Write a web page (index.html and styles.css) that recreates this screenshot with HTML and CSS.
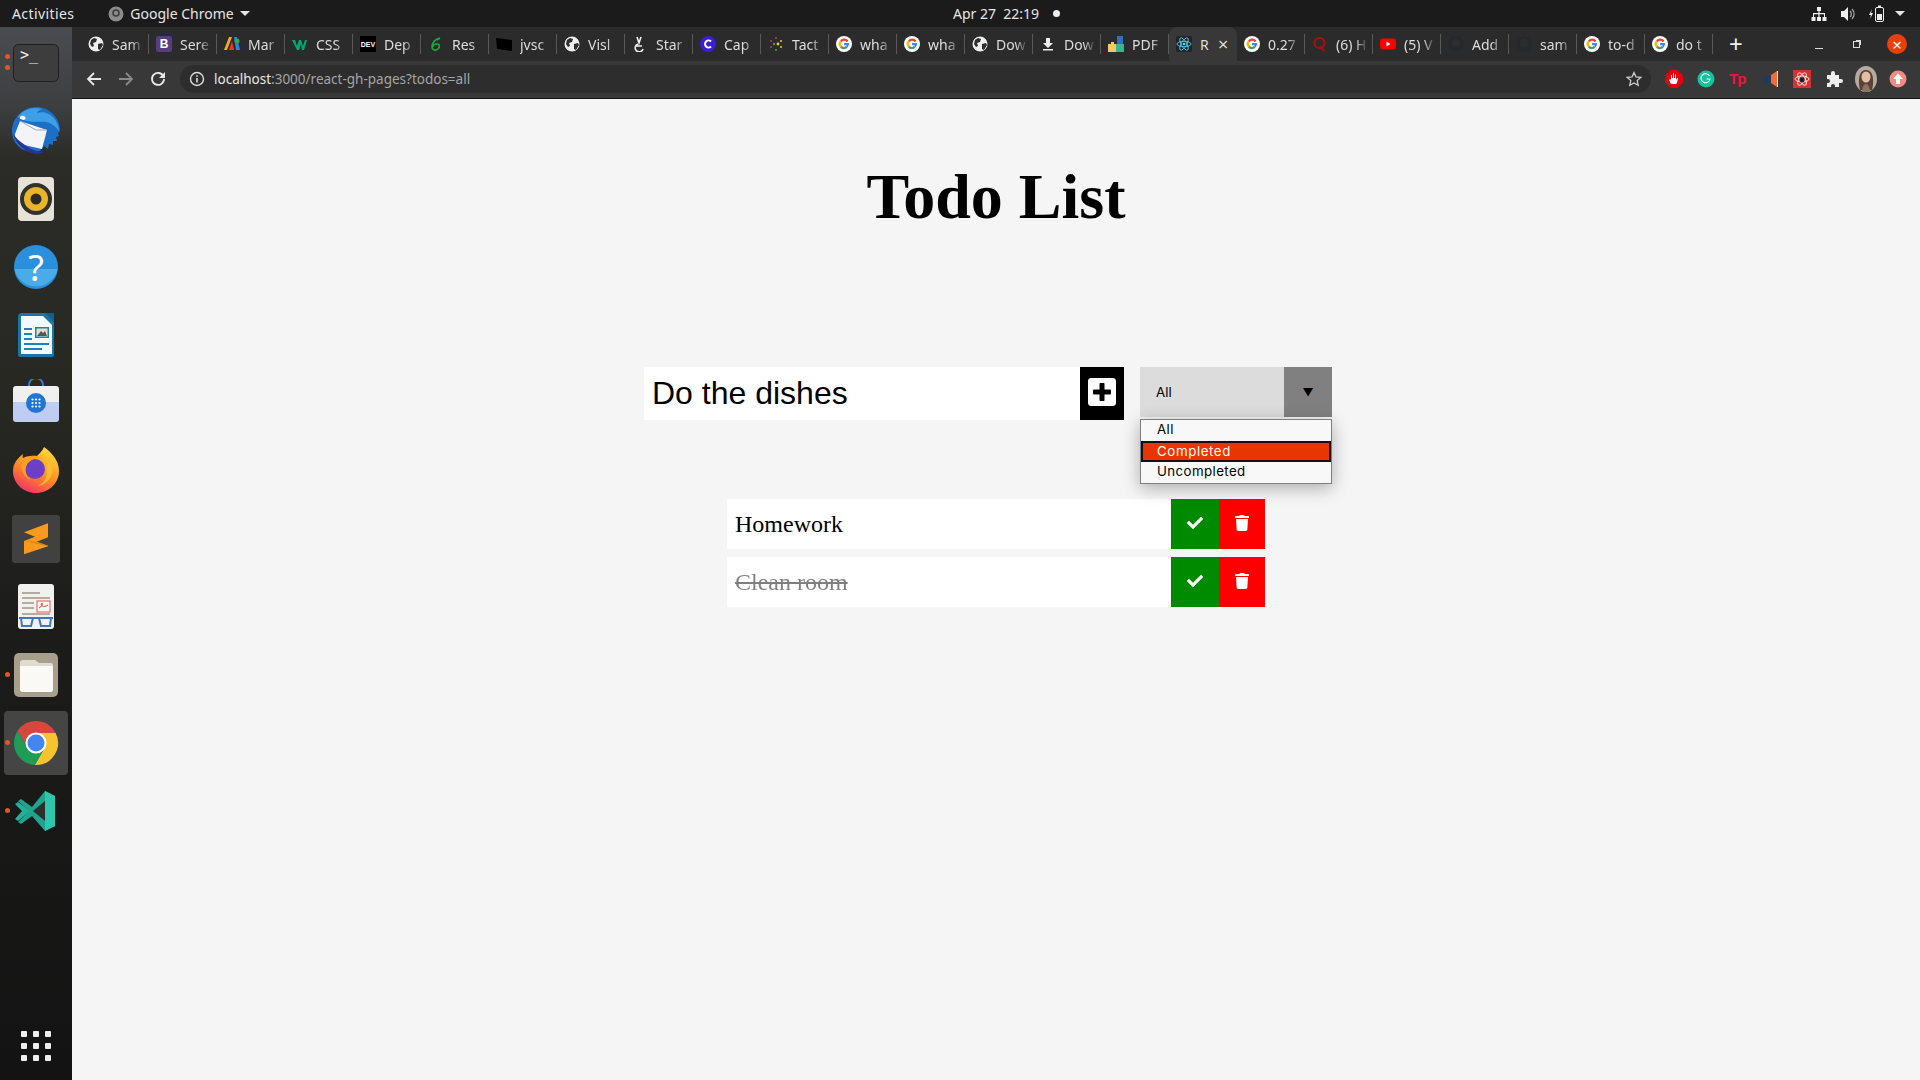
FILE: index.html
```html
<!doctype html>
<html lang="en">
<head>
    <meta charset="UTF-8">
    <link rel="stylesheet" href="styles.css">
    <title>Todo List</title>
</head>
<body>
<svg class="defs" width="0" height="0">
    <symbol id="globe" viewBox="0 0 16 16">
        <circle cx="8" cy="8" r="7.5" fill="#eee"/>
        <path d="M3 4l3-2 3 1-1 3-3 1 1 3-2 1-2-3zM10 8l4-1 1 2-3 5-2-1z" fill="#2d2d2d"/>
    </symbol>
    <symbol id="google" viewBox="0 0 16 16">
        <circle cx="8" cy="8" r="8" fill="#fff"/>
        <path d="M12.5 5.2A5 5 0 0 0 4 4.6l1.8 1.6a2.7 2.7 0 0 1 4.6-.1z" fill="#ea4335"/>
        <path d="M4 4.6a5 5 0 0 0 0 6.8l1.8-1.6a2.7 2.7 0 0 1 0-3.6z" fill="#fbbc05"/>
        <path d="M4 11.4a5 5 0 0 0 7.6.2l-1.8-1.5a2.7 2.7 0 0 1-4-.3z" fill="#34a853"/>
        <path d="M13 7H8v2.2h2.8a2.7 2.7 0 0 1-1 .9l1.8 1.5A5 5 0 0 0 13 7z" fill="#4285f4"/>
    </symbol>
    <symbol id="github" viewBox="0 0 16 16">
        <circle cx="8" cy="8" r="7.5" fill="#24292e"/>
        <circle cx="8" cy="7" r="4" fill="#2d2d2d"/>
    </symbol>
    <symbol id="icon-check" viewBox="0 0 512 512">
        <path fill="#fff" d="M173.898 439.404l-166.4-166.4c-9.997-9.997-9.997-26.206 0-36.204l36.203-36.204c9.997-9.998 26.207-9.998 36.204 0L192 312.69 432.095 72.596c9.997-9.997 26.207-9.997 36.204 0l36.203 36.204c9.997 9.997 9.997 26.206 0 36.204l-294.4 294.401c-9.998 9.997-26.207 9.997-36.204-.001z"/>
    </symbol>
    <symbol id="icon-trash" viewBox="0 0 448 512">
        <path fill="#fff" d="M432 32H312l-9.4-18.7A24 24 0 0 0 281.1 0H166.8a23.72 23.72 0 0 0-21.4 13.3L136 32H16A16 16 0 0 0 0 48v32a16 16 0 0 0 16 16h416a16 16 0 0 0 16-16V48a16 16 0 0 0-16-16zM53.2 467a48 48 0 0 0 47.9 45h245.8a48 48 0 0 0 47.9-45L416 128H32z"/>
    </symbol>
</svg>

<header class="topbar">
    <div class="topbar-left">
        <span class="activities">Activities</span>
        <span class="app-menu">
            <svg class="app-icon" viewBox="0 0 16 16"><circle cx="8" cy="8" r="7.5" fill="#8b8b8b"/><circle cx="8" cy="7" r="3" fill="none" stroke="#3a3a3a" stroke-width="1.5"/></svg>
            Google Chrome
            <i class="caret"></i>
        </span>
    </div>
    <div class="clock">
        <span>Apr 27&nbsp; 22:19</span>
        <i class="clock-dot"></i>
    </div>
    <div class="tray">
        <svg width="16" height="16" viewBox="0 0 16 16"><path fill="#eee" d="M6 1h4v4H8.600v2H14v4h1.500v4h-4v-4H13V8.300H8.600V11H10v4H6v-4h1.400V8.300H3V11h1.500v4h-4v-4H2V7h5.400V5H6z"/></svg>
        <svg width="16" height="16" viewBox="0 0 16 16"><path fill="#eee" d="M1 5h3l4-4v14l-4-4H1z"/><path fill="none" stroke="#aaa" stroke-width="1.200" d="M10 5a4 4 0 0 1 0 6M12 3a7 7 0 0 1 0 10"/></svg>
        <svg width="16" height="18" viewBox="0 0 16 18"><path fill="#eee" d="M3 4L0 10h2l-1 4 3-6H2z"/><rect x="6.500" y="2.500" width="8" height="14" rx="1.500" fill="none" stroke="#eee"/><rect x="9" y="0.500" width="3" height="2" fill="#eee"/><rect x="8" y="9" width="5" height="6" fill="#eee"/></svg>
        <i class="caret"></i>
    </div>
</header>

<div class="desktop">
    <nav class="dock">
        <div class="dock-slot has-dot">
            <i class="dock-dot"></i><i class="dock-dot"></i>
            <svg class="dock-icon" viewBox="0 0 48 48">
                <rect x="1.500" y="5.500" width="45" height="37" rx="5" fill="#3d3d3d" stroke="#1f1f1f"/>
                <text x="8" y="21" class="prompt">&gt;_</text>
            </svg>
        </div>
        <div class="dock-slot">
            <svg class="dock-icon" viewBox="0 0 48 48">
                <path d="M24 0c13 0 24 10 24 24l-2 2 1 3-3 1 1 4-4 0 0 4-4-1-1 5-4-3-4 5C11 48 0 37 0 24S11 0 24 0z" fill="#1c6fc6"/>
                <path d="M6 10C11 3 20-1 30 2c-3 1-5 3-5 4 6-2 14 0 19 8 2 4 3 7 3 10-3-4-7-8-13-9-7-1-18 2-28-5z" fill="#3d9fe6"/>
                <path d="M8 12c-1-2 1-4 4-3l2 2-2 2z" fill="#fff"/>
                <path d="M8 14l27 9-5 19-18-4C6 34 2 30 3 27z" fill="#f4f4f8"/>
                <path d="M8 14l16 9 11 0" fill="none" stroke="#a7a9b8"/>
                <path d="M1 27c3 9 11 19 24 20 3 0 5-1 7-2-8 0-14-3-19-7-5-3-9-7-12-11z" fill="#27339a"/>
            </svg>
        </div>
        <div class="dock-slot">
            <svg class="dock-icon" viewBox="0 0 48 48">
                <rect x="6" y="2" width="36" height="44" rx="4" fill="#e8e3d8"/>
                <circle cx="24" cy="24" r="16" fill="#33312e"/>
                <circle cx="24" cy="24" r="12" fill="#e9b429"/>
                <circle cx="24" cy="24" r="5.500" fill="#2c2a28"/>
            </svg>
        </div>
        <div class="dock-slot">
            <svg class="dock-icon" viewBox="0 0 48 48">
                <circle cx="24" cy="24" r="22" fill="#2b8fdc"/>
                <path d="M2.500 26h43a22 22 0 0 1-43 0z" fill="#49ace8"/>
                <text x="24" y="38" class="help-mark">?</text>
            </svg>
        </div>
        <div class="dock-slot">
            <svg class="dock-icon" viewBox="0 0 48 48">
                <path d="M10 2h32v2L42 44a2 2 0 0 1-2 2H8a2 2 0 0 1-2-2V6a4 4 0 0 1 4-4z" fill="#1b75a8"/>
                <path d="M9 5h22l9 9v29H9z" fill="#f4fafd"/>
                <path d="M33 2h9v9z" fill="#165f8a"/>
                <path d="M12 17h8v2h-8zM12 22h8v2h-8zM12 27h8v2h-8zM12 32h25v2H12zM12 37h18v2H12z" fill="#1b82bd"/>
                <rect x="23" y="16" width="14" height="11" fill="#1b82bd"/>
                <rect x="24.500" y="17.500" width="11" height="8" fill="#e6dec8"/>
                <path d="M25 25l4-5 2 2 2-2 2 5z" fill="#555"/>
            </svg>
        </div>
        <div class="dock-slot">
            <svg class="dock-icon" viewBox="0 0 48 48">
                <path d="M17 9V6a7 7 0 0 1 14 0v3" fill="none" stroke="#2c7bd6" stroke-width="2"/>
                <path d="M4 7h40a3 3 0 0 1 3 3v14H1V10a3 3 0 0 1 3-3z" fill="#f0f0f0"/>
                <path d="M1 23h46v17a3 3 0 0 1-3 3H4a3 3 0 0 1-3-3z" fill="#bfcdf2"/>
                <circle cx="24" cy="24" r="10" fill="#1f74d4"/>
                <g fill="#fff">
                    <circle cx="20.500" cy="20.500" r="1.100"/><circle cx="24" cy="20.500" r="1.100"/><circle cx="27.500" cy="20.500" r="1.100"/>
                    <circle cx="20.500" cy="24" r="1.100"/><circle cx="24" cy="24" r="1.100"/><circle cx="27.500" cy="24" r="1.100"/>
                    <circle cx="20.500" cy="27.500" r="1.100"/><circle cx="24" cy="27.500" r="1.100"/><circle cx="27.500" cy="27.500" r="1.100"/>
                </g>
            </svg>
        </div>
        <div class="dock-slot">
            <svg class="dock-icon" viewBox="0 0 48 48">
                <defs>
                    <linearGradient id="fox" x1="0.800" y1="0" x2="0.300" y2="1">
                        <stop offset="0" stop-color="#ffdf3c"/>
                        <stop offset="0.550" stop-color="#ff8f1f"/>
                        <stop offset="1" stop-color="#f4306a"/>
                    </linearGradient>
                </defs>
                <path d="M1 24C1 16 6 11 11 7c-1 3 0 5 1 6 3-3 8-5 13-4 3-3 6-6 7-9 7 5 15 13 15 24 0 12-10 22-23 22S1 36 1 24z" fill="url(#fox)"/>
                <circle cx="23" cy="22" r="10" fill="#6d3ec6"/>
                <path d="M11 11c6-3 15-3 20 1-7-2-11 0-15 4-4 5-3 14 3 17-7-2-12-11-8-22z" fill="#ff9e22"/>
                <path d="M33 10c6 4 9 12 6 19-2 5-7 9-13 10 6-3 9-8 9-15 0-5-1-9-2-14z" fill="#ffbb33"/>
            </svg>
        </div>
        <div class="dock-slot">
            <svg class="dock-icon" viewBox="0 0 48 48">
                <rect width="48" height="48" rx="3" fill="#414141"/>
                <path d="M12 17.300L36 8.300v14l-11.300 4.400L36 30.700v.5L12 39.300V26l11-4.300-11-4.400z" fill="#f99a1c"/>
                <path d="M12 26l12.700.7L36 30.700v.5L12 26z" fill="#d98410"/>
            </svg>
        </div>
        <div class="dock-slot">
            <svg class="dock-icon" viewBox="0 0 48 48">
                <rect x="6" y="1" width="36" height="45" rx="3" fill="#f1f1ef"/>
                <path d="M10 9h18v2H10zM10 14h28v2H10zM10 19h12v2H10zM10 24h12v2H10zM10 30h28v2H10z" fill="#b5ae9c"/>
                <rect x="25" y="18" width="13" height="11" fill="#f7f7f5" stroke="#e65a4e"/>
                <path d="M27 25c3-1 4-5 3-5-2 1 0 6 6 2" fill="none" stroke="#e0453a"/>
                <path d="M7 35h34M9 35l1 8h9l2-8M39 35l-1 8h-9l-2-8" fill="none" stroke="#3f76c0" stroke-width="2"/>
            </svg>
        </div>
        <div class="dock-slot has-dot">
            <i class="dock-dot"></i>
            <svg class="dock-icon" viewBox="0 0 48 48">
                <rect x="2" y="2" width="44" height="44" rx="5" fill="#a79f8c"/>
                <path d="M8 12a3 3 0 0 1 3-3h12l4 3h12a2 2 0 0 1 2 2v24a3 3 0 0 1-3 3H11a3 3 0 0 1-3-3z" fill="#e0dcd2"/>
                <path d="M8 16a1 1 0 0 1 1-1h30a2 2 0 0 1 2 2v21a3 3 0 0 1-3 3H11a3 3 0 0 1-3-3z" fill="#faf9f6"/>
            </svg>
        </div>
        <div class="dock-slot has-dot is-active">
            <i class="dock-dot"></i>
            <svg class="dock-icon" viewBox="0 0 48 48">
                <path d="M43.600 14A22 22 0 0 0 5.540 12.030L15.340 29 24 14z" fill="#d8473b"/>
                <path d="M43.600 14H24l8.660 15-9.800 16.970A22 22 0 0 0 43.600 14z" fill="#f7c430"/>
                <path d="M5.540 12.030A22 22 0 0 0 22.860 45.970L32.660 29H15.340z" fill="#1f9c55"/>
                <circle cx="24" cy="24" r="10.500" fill="#fff"/>
                <circle cx="24" cy="24" r="8.500" fill="#4286f0"/>
            </svg>
        </div>
        <div class="dock-slot has-dot">
            <i class="dock-dot"></i>
            <svg class="dock-icon" viewBox="0 0 48 48">
                <path d="M3 17l3-2 12 9-12 10-3-2 7-8z" fill="#23b09a"/>
                <path d="M6 14l3-2 11 8L33 4l10 5v30l-10 5-13-15-11 8-3-2 11-11z" fill="#1fa58f"/>
                <path d="M33 4l10 5v30l-10 5z" fill="#2fc7ac"/>
                <path d="M33 14v20l-12-10z" fill="#2d2f2b"/>
            </svg>
        </div>
        <div class="dock-apps">
            <i></i><i></i><i></i><i></i><i></i><i></i><i></i><i></i><i></i>
        </div>
    </nav>

    <div class="browser">
        <div class="tabstrip">
            <div class="tab"><svg class="favicon"><use href="#globe"/></svg><span class="tab-title">Sam</span></div>
            <div class="tab"><svg class="favicon" viewBox="0 0 16 16"><rect width="16" height="16" rx="2" fill="#563d7c"/><text x="8" y="12" class="fav-letter">B</text></svg><span class="tab-title">Sere</span></div>
            <div class="tab"><svg class="favicon" viewBox="0 0 16 16"><path d="M0 14L5 1h3L3 14z" fill="#f9a825"/><path d="M5 14L8 5l2 9z" fill="#e53935"/><path d="M10 1h3l3 13h-4z" fill="#1e88e5"/><circle cx="13" cy="5" r="2.500" fill="#43a047"/></svg><span class="tab-title">Mar</span></div>
            <div class="tab"><svg class="favicon" viewBox="0 0 16 16"><path d="M0 4h3l2 6 2-6h2l2 6 2-6h2l-3 10h-2L9 8l-2 6H5z" fill="#04aa6d"/></svg><span class="tab-title">CSS</span></div>
            <div class="tab"><svg class="favicon" viewBox="0 0 16 16"><rect width="16" height="16" fill="#000"/><text x="8" y="11" class="fav-dev">DEV</text></svg><span class="tab-title">Dep</span></div>
            <div class="tab"><svg class="favicon" viewBox="0 0 16 16"><path d="M12 2C7 3 4 7 4 11c0 3 4 4 6 2s2-5-1-5-4 2-4 3M12 2l-3 2" fill="none" stroke="#0fae3c" stroke-width="1.600"/></svg><span class="tab-title">Res</span></div>
            <div class="tab"><svg class="favicon" viewBox="0 0 16 16"><path d="M0 2l16 2v11L1 13z" fill="#000"/></svg><span class="tab-title">jvsc</span></div>
            <div class="tab"><svg class="favicon"><use href="#globe"/></svg><span class="tab-title">Visl</span></div>
            <div class="tab"><svg class="favicon" viewBox="0 0 16 16"><path d="M5 1l2 6 2-6M6 8a4 4 0 1 0 5 5M4 10h6" fill="none" stroke="#eee" stroke-width="1.600"/></svg><span class="tab-title">Star</span></div>
            <div class="tab"><svg class="favicon" viewBox="0 0 16 16"><circle cx="8" cy="8" r="8" fill="#3a1ed6"/><path d="M11 5.500a3.500 3.500 0 1 0 0 5" fill="none" stroke="#fff" stroke-width="2"/></svg><span class="tab-title">Cap</span></div>
            <div class="tab"><svg class="favicon" viewBox="0 0 16 16"><g fill="#a5496b"><circle cx="3" cy="5" r="1"/><circle cx="3" cy="11" r="1"/><circle cx="8" cy="2" r="1"/></g><g fill="#5c9a4a"><circle cx="8" cy="14" r="1"/><circle cx="6" cy="8" r="1.200"/></g><g fill="#f2c82c"><circle cx="13" cy="5" r="1"/><circle cx="13" cy="11" r="1"/><circle cx="10" cy="8" r="1.400"/></g></svg><span class="tab-title">Tact</span></div>
            <div class="tab"><svg class="favicon"><use href="#google"/></svg><span class="tab-title">wha</span></div>
            <div class="tab"><svg class="favicon"><use href="#google"/></svg><span class="tab-title">wha</span></div>
            <div class="tab"><svg class="favicon"><use href="#globe"/></svg><span class="tab-title">Dow</span></div>
            <div class="tab"><svg class="favicon" viewBox="0 0 16 16"><path d="M6 2h4v5h3l-5 5-5-5h3zM3 13h10v1.500H3z" fill="#eee"/></svg><span class="tab-title">Dow</span></div>
            <div class="tab"><svg class="favicon" viewBox="0 0 16 16"><path d="M0 8h3V6h3v2h2v8H0z" fill="#f7c964"/><path d="M9 0h6v8H9z" fill="#2f6fc4"/><path d="M8 8h8v8H8z" fill="#39b58f"/></svg><span class="tab-title">PDF</span></div>
            <div class="tab is-active"><svg class="favicon" viewBox="0 0 16 16"><rect width="16" height="16" rx="2" fill="#20232a"/><g fill="none" stroke="#61dafb" stroke-width="0.800"><ellipse cx="8" cy="8" rx="7" ry="2.700"/><ellipse cx="8" cy="8" rx="7" ry="2.700" transform="rotate(60 8 8)"/><ellipse cx="8" cy="8" rx="7" ry="2.700" transform="rotate(120 8 8)"/></g><circle cx="8" cy="8" r="1.300" fill="#61dafb"/></svg><span class="tab-title">R</span><span class="tab-close">×</span></div>
            <div class="tab"><svg class="favicon"><use href="#google"/></svg><span class="tab-title">0.27</span></div>
            <div class="tab"><svg class="favicon" viewBox="0 0 16 16"><circle cx="7.500" cy="7" r="5" fill="none" stroke="#a80f0f" stroke-width="2.200"/><path d="M8 10l4 5" stroke="#a80f0f" stroke-width="2.200"/></svg><span class="tab-title">(6) H</span></div>
            <div class="tab"><svg class="favicon" viewBox="0 0 16 16"><rect y="2.500" width="16" height="11" rx="3" fill="#f00"/><path d="M6.500 5.500l4 2.500-4 2.500z" fill="#fff"/></svg><span class="tab-title">(5) V</span></div>
            <div class="tab"><svg class="favicon"><use href="#github"/></svg><span class="tab-title">Add</span></div>
            <div class="tab"><svg class="favicon"><use href="#github"/></svg><span class="tab-title">sam</span></div>
            <div class="tab"><svg class="favicon"><use href="#google"/></svg><span class="tab-title">to-d</span></div>
            <div class="tab"><svg class="favicon"><use href="#google"/></svg><span class="tab-title">do t</span></div>
            <span class="new-tab">+</span>
            <div class="window-controls">
                <i class="win-min"></i>
                <i class="win-max"></i>
                <span class="win-close">×</span>
            </div>
        </div>

        <div class="toolbar">
            <svg class="nav-btn" viewBox="0 0 16 16"><path d="M15 8H2M8 2L2 8l6 6" fill="none" stroke="#e8e8e8" stroke-width="1.800"/></svg>
            <svg class="nav-btn" viewBox="0 0 16 16"><path d="M1 8h13M8 2l6 6-6 6" fill="none" stroke="#8a8a8a" stroke-width="1.800"/></svg>
            <svg class="nav-btn" viewBox="0 0 16 16"><path d="M13.500 5.500A6 6 0 1 0 14 8" fill="none" stroke="#e8e8e8" stroke-width="1.800"/><path d="M15 1v6H9z" fill="#e8e8e8"/></svg>
            <div class="omnibox">
                <svg class="info-icon" viewBox="0 0 16 16"><circle cx="8" cy="8" r="6.500" fill="none" stroke="#ddd" stroke-width="1.400"/><path d="M7.200 7h1.600v4.500H7.200zM7.200 4.200h1.600v1.600H7.200z" fill="#ddd"/></svg>
                <span class="url"><b>localhost</b>:3000/react-gh-pages?todos=all</span>
                <svg class="star" viewBox="0 0 16 16"><path d="M8 1.500l2 4.400 4.800.5-3.600 3.200 1 4.700L8 11.900l-4.200 2.400 1-4.700L1.200 6.400 6 5.900z" fill="none" stroke="#ccc" stroke-width="1.300"/></svg>
            </div>
            <div class="extensions">
                <svg viewBox="0 0 18 18"><path d="M5.500 0h7L18 5.500v7L12.500 18h-7L0 12.500v-7z" fill="#e3000f"/><path d="M6 14l-2-4 1-1 1 1V5h1v3h1V3.500h1V8h1V4.500h1V10l1-2h1l-1 5-1 1z" fill="#fff"/></svg>
                <svg viewBox="0 0 18 18"><circle cx="9" cy="9" r="8.500" fill="#15c39a"/><path d="M12.500 6a4.500 4.500 0 1 0 .5 3H9.500" fill="none" stroke="#fff" stroke-width="1.200"/></svg>
                <span class="ext-tp">Tp</span>
                <svg viewBox="0 0 18 18"><path d="M10 5l6-4v16l-6-4z" fill="#f26b38"/><path d="M16 1h1v16h-1z" fill="#eee"/><path d="M2 6h8v6H6v4H4v-4H2z" fill="#1f3a5f"/></svg>
                <svg viewBox="0 0 18 18"><rect width="18" height="18" fill="#d63031"/><g fill="none" stroke="#fff" stroke-width="0.800"><ellipse cx="9" cy="9" rx="7" ry="3"/><ellipse cx="9" cy="9" rx="7" ry="3" transform="rotate(60 9 9)"/><ellipse cx="9" cy="9" rx="7" ry="3" transform="rotate(120 9 9)"/></g><circle cx="9" cy="10" r="2.500" fill="#222"/></svg>
                <svg viewBox="0 0 18 18"><path d="M2 5h4V3a2 2 0 0 1 4 0v2h4v4h2a2 2 0 0 1 0 4h-2v4h-4v-1a2 2 0 0 0-4 0v1H2v-4h1a2 2 0 0 0 0-4H2z" fill="#eee"/></svg>
                <svg class="ext-avatar" viewBox="0 0 22 26"><ellipse cx="11" cy="13" rx="11" ry="13" fill="#b5aca0"/><path d="M5 24c-2-8-2-20 6-20s8 12 6 20z" fill="#5a4234"/><ellipse cx="11" cy="11" rx="4.500" ry="5.500" fill="#e4bfa3"/><path d="M7 26c0-5 2-8 4-8s4 3 4 8z" fill="#8a7466"/></svg>
                <svg viewBox="0 0 18 18"><circle cx="9" cy="9" r="8.500" fill="#f28b82"/><path d="M9 3.500L14 9h-3v5H7V9H4z" fill="#fff"/></svg>
            </div>
        </div>

        <main class="page">
            <h1>Todo List</h1>
            <form class="todo-form">
                <div class="todo-input">Do the dishes</div>
                <button class="todo-add" type="button">
                    <svg viewBox="0 0 448 512"><path fill="#fff" d="M400 32H48C21.500 32 0 53.500 0 80v352c0 26.500 21.500 48 48 48h352c26.500 0 48-21.500 48-48V80c0-26.500-21.500-48-48-48zm-32 252c0 6.600-5.400 12-12 12h-92v92c0 6.600-5.400 12-12 12h-56c-6.600 0-12-5.400-12-12v-92H92c-6.600 0-12-5.400-12-12v-56c0-6.600 5.400-12 12-12h92v-92c0-6.600 5.400-12 12-12h56c6.600 0 12 5.400 12 12v92h92c6.600 0 12 5.400 12 12v56z"/></svg>
                </button>
                <div class="select">
                    <span class="select-value">All</span>
                    <span class="select-arrow">▼</span>
                    <ul class="select-menu">
                        <li>All</li>
                        <li class="selected">Completed</li>
                        <li>Uncompleted</li>
                    </ul>
                </div>
            </form>
            <ul class="todo-list">
                <li class="todo">
                    <span class="todo-text">Homework</span>
                    <button class="btn-complete" type="button"><svg><use href="#icon-check"/></svg></button>
                    <button class="btn-delete" type="button"><svg><use href="#icon-trash"/></svg></button>
                </li>
                <li class="todo is-done">
                    <span class="todo-text">Clean room</span>
                    <button class="btn-complete" type="button"><svg><use href="#icon-check"/></svg></button>
                    <button class="btn-delete" type="button"><svg><use href="#icon-trash"/></svg></button>
                </li>
            </ul>
        </main>
    </div>
</div>
</body>
</html>
```

FILE: styles.css
```css
* {
    box-sizing: border-box;
}

html, body {
    height: 100%;
}

body {
    display: flex;
    flex-direction: column;
    height: 1080px;
    margin: 0;
    overflow: hidden;
    font-family: 'Noto Sans', sans-serif;
    background: #141414;
}

i {
    display: block;
}

.defs {
    position: absolute;
}

/* gnome top bar */
.topbar {
    display: flex;
    align-items: center;
    flex: none;
    height: 27px;
    color: #e6e6e6;
    font-size: 14px;
    background: #1b1b1b;
}

.topbar-left {
    display: flex;
    align-items: center;
    gap: 34px;
    width: 953px;
    padding-left: 12px;
}

.activities {
    letter-spacing: .4px;
}

.app-menu {
    display: flex;
    align-items: center;
    gap: 6px;
}

.app-icon {
    width: 16px;
    height: 16px;
}

.caret {
    width: 0;
    height: 0;
    border-top: 5px solid #e6e6e6;
    border-left: 5px solid transparent;
    border-right: 5px solid transparent;
}

.clock {
    display: flex;
    align-items: center;
    gap: 14px;
}

.clock-dot {
    width: 7px;
    height: 7px;
    border-radius: 50%;
    background: #eee;
}

.tray {
    display: flex;
    align-items: center;
    gap: 13px;
    margin-left: auto;
    padding-right: 15px;
}

.tray .caret {
    margin-left: -3px;
}

.desktop {
    display: flex;
    flex: 1;
    min-height: 0;
}

/* dock */
.dock {
    display: flex;
    flex-direction: column;
    flex: none;
    width: 72px;
    padding-top: 2px;
    background: linear-gradient(#4b4c51 0, #3d3e40 80px, #2b2c28 130px, #272822 380px, #1c1c1b 600px, #131313 1053px);
}

.dock-slot {
    position: relative;
    display: flex;
    align-items: center;
    justify-content: center;
    flex: none;
    height: 68px;
}

.dock-slot.is-active:before {
    content: "";
    position: absolute;
    top: 2px;
    left: 4px;
    width: 64px;
    height: 64px;
    border-radius: 4px;
    background: #454545;
}

.dock-icon {
    position: relative;
    width: 48px;
    height: 48px;
}

.dock-dot {
    position: absolute;
    left: 5px;
    top: 31px;
    width: 5px;
    height: 5px;
    border-radius: 50%;
    background: #e95420;
    z-index: 1;
}

.dock-dot:nth-child(2) {
    top: 36px;
}

.dock-dot:first-child:nth-last-child(3) {
    top: 25px;
}

.prompt {
    fill: #eee;
    font: 15px 'DejaVu Sans Mono', monospace;
}

.help-mark {
    fill: #fff;
    font: 36px 'Noto Sans', sans-serif;
    text-anchor: middle;
}

.dock-apps {
    display: grid;
    grid-template-columns: repeat(3, 6px);
    gap: 6px;
    justify-content: center;
    margin-top: auto;
    padding-bottom: 19px;
}

.dock-apps i {
    width: 6px;
    height: 6px;
    border-radius: 1px;
    background: #eee;
}

/* chrome */
.browser {
    display: flex;
    flex-direction: column;
    flex: 1;
    min-width: 0;
}

.tabstrip {
    display: flex;
    align-items: stretch;
    flex: none;
    height: 34px;
    padding-left: 9px;
    background: #2b2b2b;
}

.tab {
    position: relative;
    display: flex;
    align-items: center;
    gap: 8px;
    flex: none;
    width: 68px;
    padding-left: 7px;
    color: #ddd;
    font-size: 14px;
}

.tab:after {
    content: "";
    position: absolute;
    top: 7px;
    right: 0;
    width: 1px;
    height: 20px;
    background: #5a5a5a;
}

.tab.is-active {
    border-radius: 8px 8px 0 0;
    background: #383838;
}

.tab.is-active:after {
    display: none;
}

.favicon {
    flex: none;
    width: 16px;
    height: 16px;
}

.tab-title {
    width: 32px;
    white-space: nowrap;
    -webkit-mask-image: linear-gradient(to right, #000 60%, transparent);
    mask-image: linear-gradient(to right, #000 60%, transparent);
}

.is-active .tab-title {
    width: 14px;
    -webkit-mask-image: none;
    mask-image: none;
}

.tab-close {
    margin-left: -4px;
    font-size: 18px;
    line-height: 1;
}

.fav-letter {
    fill: #fff;
    font: bold 12px 'Liberation Sans', sans-serif;
    text-anchor: middle;
}

.fav-dev {
    fill: #fff;
    font: bold 7px 'Liberation Sans', sans-serif;
    text-anchor: middle;
}

.new-tab {
    display: flex;
    align-items: center;
    margin-left: 16px;
    color: #f0f0f0;
    font-size: 24px;
    line-height: 1;
}

.window-controls {
    display: flex;
    align-items: center;
    margin-left: auto;
    padding-right: 13px;
}

.win-min {
    width: 8px;
    height: 1px;
    margin-top: 8px;
    background: #ddd;
}

.win-max {
    width: 7px;
    height: 7px;
    margin-left: 30px;
    border: 1px solid #ddd;
    box-shadow: 2px -2px 0 -1px #ddd;
}

.win-close {
    display: flex;
    align-items: center;
    justify-content: center;
    width: 20px;
    height: 20px;
    margin-left: 27px;
    color: #fff;
    font-size: 17px;
    line-height: 1;
    border-radius: 50%;
    background: #e8400c;
}

.toolbar {
    display: flex;
    align-items: center;
    flex: none;
    height: 38px;
    padding: 0 0 2px 14px;
    background: #383838;
    border-bottom: 1px solid #141414;
}

.nav-btn {
    flex: none;
    width: 16px;
    height: 16px;
    margin-right: 16px;
}

.omnibox {
    display: flex;
    align-items: center;
    flex: none;
    width: 1471px;
    height: 28px;
    margin-left: -2px;
    padding: 0 9px;
    border-radius: 14px;
    background: #2d2d2d;
}

.info-icon {
    width: 16px;
    height: 16px;
    margin-right: 9px;
}

.url {
    color: #a5a5a5;
    font-size: 13.5px;
}

.url b {
    color: #e8e8e8;
    font-weight: 400;
}

.star {
    width: 16px;
    height: 16px;
    margin-left: auto;
}

.extensions {
    display: flex;
    align-items: center;
    gap: 14px;
    margin-left: 14px;
}

.extensions svg {
    flex: none;
    width: 18px;
    height: 18px;
}

.extensions .ext-avatar {
    width: 22px;
    height: 26px;
    margin: 0 -2px;
}

.ext-tp {
    width: 18px;
    color: #f0143c;
    font: bold 15px/18px 'Liberation Sans', sans-serif;
    letter-spacing: -1px;
}

/* todo page */
.page {
    flex: 1;
    padding-top: 61px;
    background: #f5f5f5;
}

h1 {
    height: 74px;
    margin: 0;
    color: #000;
    font: bold 64px/74px 'Liberation Serif', serif;
    text-align: center;
}

.todo-form {
    display: flex;
    align-items: flex-start;
    justify-content: center;
    margin-top: 133px;
}

.todo-input {
    width: 436px;
    height: 53px;
    padding-left: 8px;
    color: #000;
    font: 32px/53px 'Liberation Sans', sans-serif;
    background: #fff;
}

.todo-add {
    display: flex;
    align-items: center;
    justify-content: center;
    width: 44px;
    height: 53px;
    padding: 0 0 3px;
    border: 0;
    background: #000;
}

.todo-add svg {
    width: 28px;
    height: 32px;
}

.select {
    position: relative;
    display: flex;
    align-items: center;
    width: 192px;
    height: 50px;
    margin: 0 16px;
    color: #000;
    font: 13.3px 'Inter', sans-serif;
    background: #dcdcdc;
}

.select-value {
    flex: 1;
    padding-left: 16px;
}

.select-arrow {
    display: flex;
    align-items: center;
    justify-content: center;
    width: 48px;
    height: 100%;
    background: #808080;
    font-size: 11px;
}

.select-menu {
    position: absolute;
    top: 52px;
    left: 0;
    width: 100%;
    margin: 0;
    padding: 0;
    list-style: none;
    border: 1px solid #7f7f7f;
    background: #f8f8f8;
    box-shadow: 0 4px 16px rgba(0, 0, 0, .3);
}

.select-menu li {
    height: 21px;
    padding-left: 16px;
    line-height: 19px;
    letter-spacing: .4px;
}

.select-menu .selected {
    color: #fff;
    padding-left: 14px;
    line-height: 16px;
    letter-spacing: .6px;
    border: 2px solid #111;
    background: #e93500;
}

.todo-list {
    display: flex;
    flex-direction: column;
    gap: 8px;
    width: 538px;
    margin: 79px auto 0;
    padding: 0;
    list-style: none;
}

.todo {
    display: flex;
    height: 50px;
    background: #fff;
}

.todo-text {
    flex: 1;
    padding-left: 8px;
    color: #000;
    font: 24px/50px 'Liberation Serif', serif;
}

.is-done .todo-text {
    opacity: .5;
    text-decoration: line-through;
}

.todo button {
    display: flex;
    align-items: center;
    justify-content: center;
    height: 50px;
    padding: 0 0 2px;
    border: 0;
}

.todo svg {
    width: 16px;
    height: 16px;
}

.btn-complete {
    width: 48px;
    background: #008a00;
}

.btn-delete {
    width: 46px;
    background: #f00;
}
```
